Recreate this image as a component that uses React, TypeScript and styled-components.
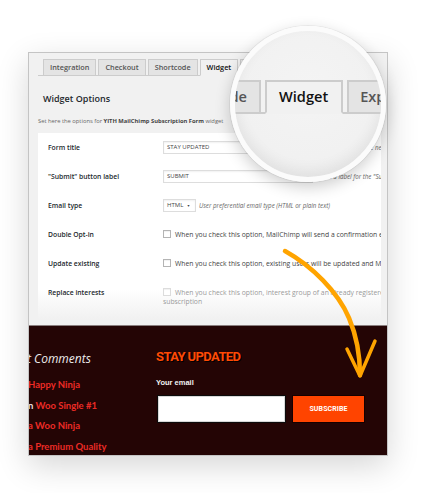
import React from "react";
import styled, { createGlobalStyle } from "styled-components";

const GlobalStyle = createGlobalStyle`
    html, body {
        margin: 0;
        padding: 0;
        background: #fff;
    }
    body {
        font-family: "Open Sans", sans-serif;
    }
`;

const TAB_NAMES = ["Integration", "Checkout", "Shortcode", "Widget", "Export"];

const Tabs: React.FC<{ active: string; names?: string[]; inset?: number }> = ({
    active,
    names = TAB_NAMES,
    inset = 5,
}) => (
    <TabRow inset={inset}>
        {names.map((name) => (
            <Tab key={name} active={name === active}>
                {name}
            </Tab>
        ))}
    </TabRow>
);

const App: React.FC = () => {
    return (
        <>
            <GlobalStyle />
            <Stage>
                <Card>
                    <Admin>
                        <Tabs active="Widget" />
                        <Heading>Widget Options</Heading>
                        <Intro>
                            Set here the options for{" "}
                            <b>YITH MailChimp Subscription Form</b> widget
                        </Intro>
                        <FormBox>
                            <Row>
                                <Label>Form title</Label>
                                <Control>
                                    <TextInput width={150}>STAY UPDATED</TextInput>
                                    <Help>Insert the title for the new subscription form</Help>
                                </Control>
                            </Row>
                            <Row>
                                <Label>"Submit" button label</Label>
                                <Control>
                                    <TextInput width={150}>SUBMIT</TextInput>
                                    <Help>Select a label for the "Submit" button</Help>
                                </Control>
                            </Row>
                            <Row>
                                <Label>Email type</Label>
                                <Control>
                                    <TextInput width={33}>
                                        HTML <Caret>▼</Caret>
                                    </TextInput>
                                    <Help>User preferential email type (HTML or plain text)</Help>
                                </Control>
                            </Row>
                            <Row>
                                <Label>Double Opt-in</Label>
                                <CheckText>
                                    <Box />
                                    When you check this option, MailChimp will send a confirmation
                                    email before adding the user to the list
                                </CheckText>
                            </Row>
                            <Row>
                                <Label>Update existing</Label>
                                <CheckText>
                                    <Box />
                                    When you check this option, existing users will be updated and
                                    MailChimp servers will not show errors
                                </CheckText>
                            </Row>
                            <Row>
                                <Label>Replace interests</Label>
                                <CheckText disabled>
                                    <Box disabled />
                                    When you check this option, interest group of an already registered
                                    user will be replaced
                                    <br />
                                    subscription
                                </CheckText>
                            </Row>
                        </FormBox>
                    </Admin>

                    <Footer>
                        <Comments>
                            <CommentsTitle>t Comments</CommentsTitle>
                            <CommentLine>
                                <CommentLink>Happy Ninja</CommentLink>
                            </CommentLine>
                            <CommentLine>
                                n <CommentLink>Woo Single #1</CommentLink>
                            </CommentLine>
                            <CommentLine>
                                <CommentLink>a Woo Ninja</CommentLink>
                            </CommentLine>
                            <CommentLine>
                                <CommentLink>a Premium Quality</CommentLink>
                            </CommentLine>
                        </Comments>
                        <Subscribe>
                            <SubscribeTitle>STAY UPDATED</SubscribeTitle>
                            <EmailLabel>Your email</EmailLabel>
                            <SubscribeRow>
                                <EmailInput />
                                <SubscribeButton>SUBSCRIBE</SubscribeButton>
                            </SubscribeRow>
                        </Subscribe>
                    </Footer>
                </Card>

                {/* magnifying glass over the tab bar, content at 2x */}
                <Magnifier>
                    <MagnifiedTabs>
                        <Tabs active="Widget" names={["Shortcode", "Widget", "Export"]} inset={0} />
                    </MagnifiedTabs>
                </Magnifier>

                <Arrow viewBox="0 0 422 493" width="422" height="493">
                    <path
                        d="M285 251 C 312 266, 338 292, 349 318 C 357 337, 360 356, 360 375"
                        fill="none"
                        stroke="#ffa400"
                        strokeWidth="4.5"
                        strokeLinecap="round"
                    />
                    <path
                        d="M347 349 L360 376 L375 341"
                        fill="none"
                        stroke="#ffa400"
                        strokeWidth="3.5"
                        strokeLinecap="round"
                        strokeLinejoin="round"
                    />
                </Arrow>
            </Stage>
        </>
    );
};

const Stage = styled.div`
    position: relative;
    width: 422px;
    height: 493px;
    overflow: hidden;
    box-sizing: border-box;
    padding: 52px 0 0 28px;
`;

const Card = styled.div`
    width: 360px;
    height: 404px;
    box-sizing: border-box;
    border: 1px solid #c4c4c4;
    box-shadow: 0 10px 30px rgba(0, 0, 0, 0.16);
    display: flex;
    flex-direction: column;
    overflow: hidden;
`;

const Admin = styled.div`
    flex: 1;
    background: #f1f1f1;
    padding: 6px 6px 6px 9px;
    display: flex;
    flex-direction: column;
    min-height: 0;
`;

const TabRow = styled.div<{ inset: number }>`
    display: flex;
    gap: 2px;
    width: 343px;
    padding-left: ${(p) => p.inset}px;
    box-sizing: border-box;
    border-bottom: 1px solid #cccccc;
    height: 17px;
`;

const Tab = styled.div<{ active?: boolean }>`
    height: 17px;
    box-sizing: border-box;
    padding: 0 6px;
    border: 1px solid #cccccc;
    border-bottom-color: ${(p) => (p.active ? "#f1f1f1" : "#cccccc")};
    background: ${(p) => (p.active ? "#f1f1f1" : "#e4e4e4")};
    color: ${(p) => (p.active ? "#111" : "#555")};
    font-size: 7.3px;
    font-weight: 600;
    line-height: 15px;
    white-space: nowrap;
`;

const Heading = styled.h2`
    margin: 17px 0 0 5px;
    font-size: 9px;
    line-height: 12px;
    font-weight: 600;
    color: #23282d;
`;

const Intro = styled.p`
    margin: 12px 0 0;
    font-size: 5.8px;
    line-height: 8px;
    color: #666;
    white-space: nowrap;

    b {
        color: #444;
        font-weight: 700;
    }
`;

const FormBox = styled.div`
    flex: 1;
    margin-top: 8px;
    padding-left: 10px;
    overflow: hidden;
    background: linear-gradient(#fff 0%, #fff 84%, #f1f1f1 100%);
`;

const Row = styled.div`
    display: grid;
    grid-template-columns: 115px 1fr;
    align-items: start;
    padding: 8px 0;
`;

const Label = styled.div`
    font-size: 6.8px;
    line-height: 13px;
    font-weight: 600;
    color: #23282d;
    white-space: nowrap;
`;

const Control = styled.div`
    display: flex;
    align-items: center;
    gap: 3px;
    height: 13px;
    white-space: nowrap;
`;

const TextInput = styled.div<{ width: number }>`
    width: ${(p) => p.width}px;
    height: 13px;
    flex-shrink: 0;
    box-sizing: border-box;
    border: 1px solid #dddddd;
    box-shadow: inset 0 1px 2px rgba(0, 0, 0, 0.06);
    background: #fff;
    padding: 0 3px;
    font-size: 6px;
    line-height: 11px;
    color: #444;
`;

const Caret = styled.span`
    font-size: 3.5px;
    vertical-align: middle;
    margin-left: 2px;
`;

const Help = styled.span`
    font-size: 6.2px;
    font-style: italic;
    color: #666;
`;

const CheckText = styled.div<{ disabled?: boolean }>`
    padding-top: 2px;
    font-size: 6.8px;
    line-height: 9px;
    color: ${(p) => (p.disabled ? "#9a9a9a" : "#444")};
    white-space: nowrap;
`;

const Box = styled.span<{ disabled?: boolean }>`
    display: inline-block;
    width: 8px;
    height: 8px;
    box-sizing: border-box;
    margin-right: 4px;
    vertical-align: -1px;
    background: #fff;
    border: 1px solid ${(p) => (p.disabled ? "#dcdcdc" : "#b4b4b4")};
    box-shadow: inset 0 1px 1px rgba(0, 0, 0, 0.06);
`;

const Footer = styled.div`
    height: 129px;
    flex-shrink: 0;
    background: #240505;
    border-top: 1px solid #8a7f7f;
    display: grid;
    grid-template-columns: 127px 1fr;
`;

const Comments = styled.div`
    padding-top: 25px;
    overflow: hidden;
    white-space: nowrap;
`;

const CommentsTitle = styled.div`
    margin-left: -2px;
    font-size: 12px;
    line-height: 16px;
    font-style: italic;
    color: #ececec;
    margin-bottom: 8px;
`;

const CommentLine = styled.div`
    margin-left: -1px;
    font-family: Lato, sans-serif;
    font-size: 9.5px;
    font-weight: 700;
    line-height: 20.5px;
    color: #e9dede;
`;

const CommentLink = styled.span`
    color: #ec2b25;
`;

const Subscribe = styled.div`
    padding-top: 23px;
`;

const SubscribeTitle = styled.div`
    font-family: Roboto, sans-serif;
    font-size: 13px;
    line-height: 16px;
    font-weight: 700;
    letter-spacing: -0.6px;
    color: #ff4a05;
    text-shadow: 1px 1px 0 #000;
`;

const EmailLabel = styled.div`
    margin-top: 13px;
    font-family: "Liberation Sans", Arial, sans-serif;
    font-size: 7.5px;
    line-height: 10px;
    font-weight: 700;
    color: #f2f2f2;
`;

const SubscribeRow = styled.div`
    display: flex;
    gap: 6px;
    margin-top: 7px;
    margin-left: 1px;
`;

const EmailInput = styled.div`
    width: 129px;
    height: 28px;
    box-sizing: border-box;
    background: #fff;
    border: 1px solid #0c0c0c;
    box-shadow: inset 0 0 0 1px #d8d8d8;
`;

const SubscribeButton = styled.div`
    width: 73px;
    height: 28px;
    box-sizing: border-box;
    background: #ff4400;
    border: 1px solid #150000;
    display: flex;
    align-items: center;
    justify-content: center;
    font-family: Roboto, sans-serif;
    font-size: 7px;
    font-weight: 700;
    color: #fff;
    letter-spacing: 0.1px;
`;

const Magnifier = styled.div`
    position: absolute;
    left: 230px;
    top: 26px;
    width: 156px;
    height: 156px;
    box-sizing: border-box;
    border-radius: 50%;
    border: 5px solid #fbfbfb;
    overflow: hidden;
    background: radial-gradient(circle at 50% 40%, #f4f4f4 0%, #f1f1f1 60%, #ebebeb 100%);
    box-shadow: 0 0 0 1px rgba(0, 0, 0, 0.05), 0 5px 16px rgba(0, 0, 0, 0.2),
        inset 0 -6px 14px rgba(0, 0, 0, 0.06);
`;

const MagnifiedTabs = styled.div`
    position: absolute;
    left: -74px;
    top: 49px;
    transform: scale(2);
    transform-origin: 0 0;
`;

const Arrow = styled.svg`
    position: absolute;
    left: 0;
    top: 0;
    pointer-events: none;
`;

export default App;
